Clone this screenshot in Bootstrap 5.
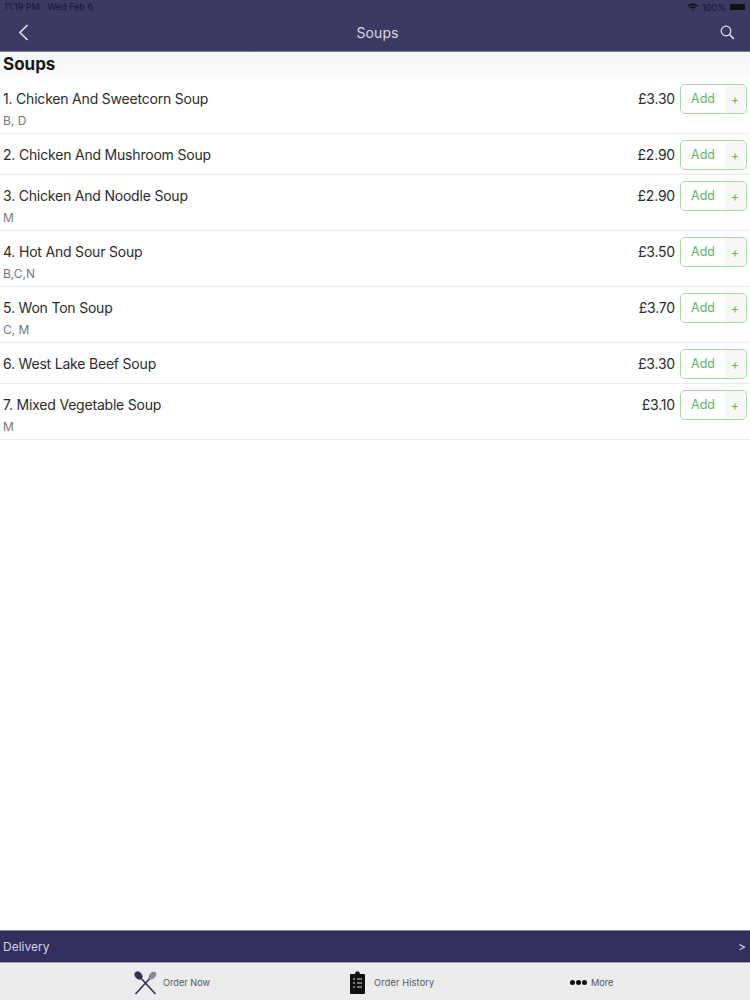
<!DOCTYPE html>
<html lang="en">

<head>
    <meta charset="UTF-8">
    <meta name="viewport" content="width=device-width, initial-scale=1.0">
    <title>Soups</title>
    <link href="https://cdn.jsdelivr.net/npm/bootstrap@5.3.0/dist/css/bootstrap.min.css" rel="stylesheet">
    <style>
        html, body { height: 100%; }
        body { font-family: Inter, "Liberation Sans", sans-serif; background: #fff; color: #2b2b2e; overflow: hidden; }
        .app-shell { height: 1000px; }
        .top-bar { background: #3c3a63; height: 52px; border-bottom: 1px solid #7d7c95; }
        .status-row { height: 13px; font-size: 9px; color: #17173a; padding: 1px 4px 0; line-height: 11px; }
        .title-row { height: 38px; padding: 0 15px 0 18px; color: #d9d9e4; font-size: 14px; }
        .page-title { font-size: 14px; letter-spacing: .1px; margin-left: 6px; }
        .section-head { height: 26px; background: linear-gradient(#f4f5f7, #fbfbfc); font-size: 17px; font-weight: 700; color: #17171a; padding-left: 3px; line-height: 24px; }
        .dish-row { border-bottom: 1px solid #ececec; padding: 6px 3px 0; }
        .dish-tall { height: 56px; }
        .dish-short { height: 41px; }
        .dish-name { font-size: 14px; line-height: 17px; padding-top: 6px; letter-spacing: -.2px; }
        .dish-note { font-size: 12px; color: #77777b; line-height: 15px; margin-top: 6px; }
        .dish-price { font-size: 14px; line-height: 17px; padding-top: 6px; margin-right: 5px; letter-spacing: -.2px; }
        .add-btn { width: 67px; height: 30px; padding: 0; border: 1.5px solid #a9d8a8; border-radius: 5px; background: #fff; color: #62b565; font-size: 12.5px; overflow: hidden; }
        .add-btn:hover { background: #fff; color: #62b565; border-color: #a9d8a8; }
        .add-label { width: 44px; padding-top: 1px; }
        .add-plus { width: 20px; background: #f6f8f6; line-height: 29px; }
        .delivery-bar { background: #322f5f; height: 33px; border-top: 1px solid #8d8ca3; border-bottom: 1px solid #9c9bb0; color: #d5d5e2; font-size: 12px; padding: 0 4px 0 3px; }
        .tab-bar { background: #ececee; height: 37px; color: #55555b; font-size: 9.2px; }
        .tab-link { color: inherit; text-decoration: none; position: absolute; top: 969px; height: 27px; }
        .tab-order { left: 134px; gap: 6px; }
        .tab-history { left: 350px; gap: 9px; letter-spacing: .15px; }
        .tab-more { left: 570px; gap: 4px; }
        .dot-row { gap: 1px; }
        .dot { width: 5px; height: 5px; background: #111; border-radius: 50%; }
    </style>
</head>

<body>
    <div class="app-shell d-flex flex-column">
        <header class="top-bar flex-shrink-0">
            <div class="status-row d-flex justify-content-between">
                <div class="d-flex gap-2"><span>11:19 PM</span><span>Wed Feb 6</span></div>
                <div class="d-flex align-items-center gap-1">
                    <svg width="10" height="8" viewBox="0 0 10 8"><path d="M0 2.600a7 7 0 0 1 10 0L9 3.700a5.600 5.600 0 0 0-8 0zM2 4.600a4.200 4.200 0 0 1 6 0L7 5.700a2.800 2.800 0 0 0-4 0zM3.900 6.600a1.500 1.500 0 0 1 2.200 0L5 8z" fill="#111"/></svg>
                    <span>100%</span>
                    <svg width="16" height="6" viewBox="0 0 16 6"><rect width="15" height="6" rx="1" fill="#111"/></svg>
                </div>
            </div>
            <div class="title-row d-flex align-items-center justify-content-between">
                <svg width="11" height="17" viewBox="0 0 11 17"><path d="M9.500 1 2 8.500 9.500 16" fill="none" stroke="#e4e4ec" stroke-width="1.6"/></svg>
                <span class="page-title">Soups</span>
                <svg width="15" height="15" viewBox="0 0 15 15"><circle cx="6" cy="6" r="4.800" fill="none" stroke="#e4e4ec" stroke-width="1.2"/><path d="m9.600 9.600 4.400 4.400" stroke="#e4e4ec" stroke-width="1.500"/></svg>
            </div>
        </header>

        <div class="section-head flex-shrink-0">Soups</div>

        <main class="flex-grow-1" id="dish-list"></main>

        <div class="delivery-bar d-flex align-items-center justify-content-between flex-shrink-0">
            <span>Delivery</span><span>&gt;</span>
        </div>
        <nav class="tab-bar flex-shrink-0">
            <a class="tab-link tab-order d-flex align-items-center" href="#">
                <svg width="23" height="24" viewBox="0 0 23 24">
                    <path d="M4 4 21.500 23M19 4 1.500 23" stroke="#34324f" stroke-width="1.600"/>
                    <ellipse cx="4.500" cy="4.500" rx="3.500" ry="4.500" transform="rotate(-42 4.500 4.500)" fill="#34324f"/>
                    <ellipse cx="18.500" cy="4.500" rx="3" ry="4.500" transform="rotate(42 18.500 4.500)" fill="#8a899b"/>
                </svg>
                <span>Order Now</span>
            </a>
            <a class="tab-link tab-history d-flex align-items-center" href="#">
                <svg width="15" height="23" viewBox="0 0 15 23">
                    <path d="M1 3h4l1-2.500h3L10 3h4a1 1 0 0 1 1 1v18a1 1 0 0 1-1 1H1a1 1 0 0 1-1-1V4a1 1 0 0 1 1-1z" fill="#111"/>
                    <path d="M3 8h2M7 8h5M3 12h2M7 12h5M3 16h2M7 16h5" stroke="#ddd" stroke-width="1"/>
                </svg>
                <span>Order History</span>
            </a>
            <a class="tab-link tab-more d-flex align-items-center" href="#">
                <span class="dot-row d-flex"><i class="dot"></i><i class="dot"></i><i class="dot"></i></span>
                <span>More</span>
            </a>
        </nav>
    </div>

    <script>
        const dishes = [
            { name: '1. Chicken And Sweetcorn Soup', note: 'B, D', price: '£3.30' },
            { name: '2. Chicken And Mushroom Soup', note: '', price: '£2.90' },
            { name: '3. Chicken And Noodle Soup', note: 'M', price: '£2.90' },
            { name: '4. Hot And Sour Soup', note: 'B,C,N', price: '£3.50' },
            { name: '5. Won Ton Soup', note: 'C, M', price: '£3.70' },
            { name: '6. West Lake Beef Soup', note: '', price: '£3.30' },
            { name: '7. Mixed Vegetable Soup', note: 'M', price: '£3.10' },
        ];
        const list = document.getElementById('dish-list');
        dishes.forEach(dish => {
            const row = document.createElement('div');
            row.className = 'dish-row d-flex justify-content-between ' + (dish.note ? 'dish-tall' : 'dish-short');
            row.innerHTML = `
      <div>
        <div class="dish-name">${dish.name}</div>
        ${dish.note ? `<div class="dish-note">${dish.note}</div>` : ''}
      </div>
      <div class="d-flex align-items-start">
        <span class="dish-price">${dish.price}</span>
        <button class="btn add-btn d-flex align-items-stretch" type="button">
          <span class="add-label d-flex align-items-center justify-content-center">Add</span>
          <span class="add-plus">+</span>
        </button>
      </div>
    `;
            list.appendChild(row);
        });
    </script>

    <script src="https://cdn.jsdelivr.net/npm/bootstrap@5.3.0/dist/js/bootstrap.bundle.min.js"></script>
</body>

</html>
